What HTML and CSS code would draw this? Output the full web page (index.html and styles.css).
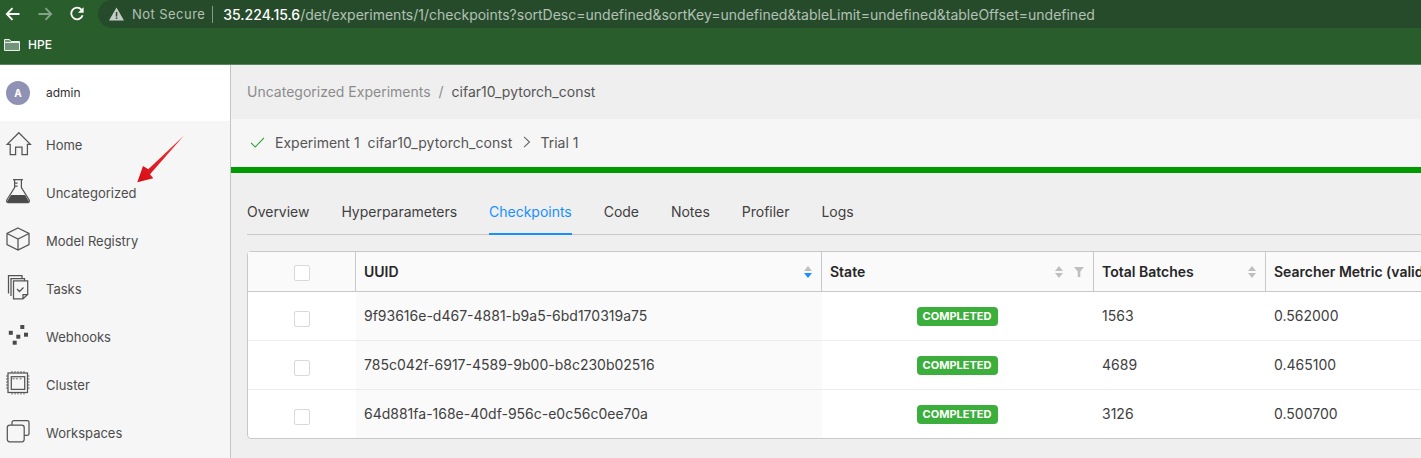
FILE: index.html
```html
<!DOCTYPE html>
<html lang="en">
<head>
<meta charset="utf-8">
<title>Checkpoints</title>
<link rel="stylesheet" href="styles.css">
</head>
<body>
<header class="browser">
  <div class="toolbar">
    <nav class="nav-buttons">
      <svg class="nav-icon" viewBox="0 0 16 16"><path d="M14.500 8H2M7.500 2.200 1.800 8l5.700 5.800"/></svg>
      <svg class="nav-icon nav-icon-off" viewBox="0 0 16 16"><path d="M1.500 8H14M8.500 2.200 14.200 8l-5.700 5.800"/></svg>
      <svg class="nav-icon" viewBox="0 0 16 16"><path d="M13.600 9.200A5.800 5.800 0 1 1 12.400 3.600"/><path class="fill" d="M14.600 1.200v5.600H9z"/></svg>
    </nav>
    <div class="omnibox">
      <svg class="warn" viewBox="0 0 15 14"><path d="M7.500 0.500 15 13.500H0z"/><rect class="warn-mark" x="6.800" y="5" width="1.500" height="4.600"/><rect class="warn-mark" x="6.800" y="10.400" width="1.500" height="1.500"/></svg>
      <span class="not-secure">Not Secure</span>
      <span class="omni-sep"></span>
      <span class="url"><span class="url-host">35.224.15.6</span>/det/experiments/1/checkpoints?sortDesc=undefined&amp;sortKey=undefined&amp;tableLimit=undefined&amp;tableOffset=undefined</span>
    </div>
  </div>
  <div class="bookmarks">
    <svg class="folder" viewBox="0 0 16 12"><path d="M.5 11.500V.5h5l1.500 2h8.500v9z"/><path class="folder-line" d="M.5 3.500h15"/></svg>
    <span class="bookmark-label">HPE</span>
  </div>
</header>

<div class="app">
  <aside class="sidebar">
    <div class="user">
      <span class="avatar">A</span>
      <span class="user-name">admin</span>
    </div>
    <ul class="menu">
      <li class="menu-item">
        <svg class="menu-icon" viewBox="0 0 24 24"><path d="M12.800-.3 1.200 11.400h3V21.600h5.400V14h6.400v7.600h5.400V11.400h3z"/></svg>
        Home
      </li>
      <li class="menu-item">
        <svg class="menu-icon" viewBox="0 0 24 24"><path d="M7-1.400h10M8.600-1.400V6.500L.8 19c-.6 1.200 0 2.600 1.500 2.600h19.400c1.500 0 2.100-1.400 1.500-2.600L15.400 6.500V-1.400M8.600 2h3M8.600 5h3"/><path class="solid" d="M5 14h14l4 6.600-1 .6H2l-1-.6z"/></svg>
        Uncategorized
      </li>
      <li class="menu-item">
        <svg class="menu-icon" viewBox="0 0 24 24"><path d="M12-1 23 4.500V15.500L12 21 1 15.500V4.500zM1 4.500 12 10 23 4.500M12 10V21"/></svg>
        Model Registry
      </li>
      <li class="menu-item">
        <svg class="menu-icon" viewBox="0 0 24 24"><path d="M7.500 3.800H21.700V17.500L17 21.800H7.500zM21.700 17.500H17V21.800M5 19V1.500H18.500V3.800M2.500 16.500V-1.500H16V1.500M11 12l2.500 2.500 4-4"/></svg>
        Tasks
      </li>
      <li class="menu-item">
        <svg class="menu-icon" viewBox="0 0 24 24"><rect class="solid" x="2.800" y="5.800" width="4" height="4"/><rect class="solid" x="14.300" y="0" width="4" height="4"/><rect class="solid" x="10.300" y="9.700" width="4" height="4"/><rect class="solid" x="18" y="7.700" width="4" height="4"/><rect class="solid" x="6.700" y="15.700" width="4" height="4"/></svg>
        Webhooks
      </li>
      <li class="menu-item">
        <svg class="menu-icon" viewBox="0 0 24 24"><rect x="2" y="0" width="19.500" height="19.500"/><rect x="5.300" y="3.700" width="13.400" height="12.700"/><path class="thin" d="M6 -2V0M9 -2V0M12 -2V0M15 -2V0M18 -2V0M6 19.500V21.500M9 19.500V21.500M12 19.500V21.500M15 19.500V21.500M18 19.500V21.500M0 3H2M0 6H2M0 9H2M0 12H2M0 15H2M21.500 3H23.500M21.500 6H23.500M21.500 9H23.500M21.500 12H23.500M21.500 15H23.500"/><path class="thin" d="M6.500 5.800h2M9.800 5.800h2M13.500 5.800h2"/></svg>
        Cluster
      </li>
      <li class="menu-item">
        <svg class="menu-icon" viewBox="0 0 24 24"><path d="M6 4V1.500Q6-.3 8-.3H21.500Q23-.3 23 1.500V12.500Q23 14.300 21 14.300H18.200"/><rect x="1.300" y="4" width="16.900" height="16.800" rx="2.500"/></svg>
        Workspaces
      </li>
    </ul>
  </aside>

  <main class="main">
    <div class="crumbs">
      <span class="crumb-muted">Uncategorized Experiments</span>
      <span class="crumb-sep">/</span>
      <span class="crumb-current">cifar10_pytorch_const</span>
    </div>
    <div class="trial-bar">
      <svg class="check" viewBox="0 0 16 12"><path d="M1 6.500 5.500 11 15 1"/></svg>
      <span class="trial-text">Experiment 1</span>
      <span class="trial-text trial-name">cifar10_pytorch_const</span>
      <svg class="chevron" viewBox="0 0 8 12"><path d="M1 .8 6.500 6 1 11.200"/></svg>
      <span class="trial-text">Trial 1</span>
    </div>
    <div class="progress"></div>
    <div class="content">
      <div class="tabs">
        <span class="tab">Overview</span>
        <span class="tab">Hyperparameters</span>
        <span class="tab tab-active">Checkpoints</span>
        <span class="tab">Code</span>
        <span class="tab">Notes</span>
        <span class="tab">Profiler</span>
        <span class="tab">Logs</span>
      </div>
      <table class="grid">
        <colgroup>
          <col class="col-check"><col class="col-uuid"><col class="col-state"><col class="col-batches"><col class="col-metric">
        </colgroup>
        <thead>
          <tr>
            <th class="cell-check"><span class="box box-head"></span></th>
            <th><div class="th-inner"><span>UUID</span>
              <svg class="sorter" viewBox="0 0 8 12"><path d="M4 0 8 5H0z"/><path class="sort-on" d="M0 7h8l-4 5z"/></svg></div></th>
            <th><div class="th-inner"><span>State</span>
              <svg class="sorter" viewBox="0 0 8 12"><path d="M4 0 8 5H0z"/><path d="M0 7h8l-4 5z"/></svg>
              <svg class="filter" viewBox="0 0 10 10"><path d="M0 0h10L6.300 4.500V10H3.700V4.500z"/></svg></div></th>
            <th><div class="th-inner"><span>Total Batches</span>
              <svg class="sorter" viewBox="0 0 8 12"><path d="M4 0 8 5H0z"/><path d="M0 7h8l-4 5z"/></svg></div></th>
            <th><div class="th-inner"><span>Searcher Metric (validation_loss)</span></div></th>
          </tr>
        </thead>
        <tbody>
          <tr>
            <td class="cell-check"><span class="box"></span></td>
            <td class="cell-uuid">9f93616e-d467-4881-b9a5-6bd170319a75</td>
            <td class="cell-state"><span class="badge">COMPLETED</span></td>
            <td>1563</td>
            <td>0.562000</td>
          </tr>
          <tr>
            <td class="cell-check"><span class="box"></span></td>
            <td class="cell-uuid">785c042f-6917-4589-9b00-b8c230b02516</td>
            <td class="cell-state"><span class="badge">COMPLETED</span></td>
            <td>4689</td>
            <td>0.465100</td>
          </tr>
          <tr>
            <td class="cell-check"><span class="box"></span></td>
            <td class="cell-uuid">64d881fa-168e-40df-956c-e0c56c0ee70a</td>
            <td class="cell-state"><span class="badge">COMPLETED</span></td>
            <td>3126</td>
            <td>0.500700</td>
          </tr>
        </tbody>
      </table>
    </div>
  </main>
</div>

<svg class="annotation" viewBox="0 0 50 50"><defs><linearGradient id="arrow-fill" x1="1" y1="0" x2="0" y2="1"><stop offset="0" stop-color="#f0343a"/><stop offset="1" stop-color="#d80d14"/></linearGradient></defs><path fill="url(#arrow-fill)" d="M47 .5 13 39.300l3.300 4L.3 47.300 6 31l5.300 3.300z"/></svg>
</body>
</html>
```

FILE: styles.css
```css
* { box-sizing: border-box; }
html, body { height: 100%; }
body {
  margin: 0;
  height: 458px;
  overflow: hidden;
  position: relative;
  display: flex;
  flex-direction: column;
  font-family: Inter, "Liberation Sans", sans-serif;
  color: #404040;
  background: #efefef;
}

/* browser chrome */
.browser { background: #295e2c; flex: none; }
.toolbar { display: flex; height: 30px; }
.nav-buttons { display: flex; align-items: center; width: 98px; height: 28px; padding-left: 5px; gap: 16px; }
.nav-icon { width: 16px; height: 16px; fill: none; stroke: #fff; stroke-width: 1.800; }
.nav-icon .fill { fill: #fff; stroke: none; }
.nav-icon-off { stroke: #83a587; }
.omnibox {
  flex: 1;
  height: 28px;
  background: #264b2b;
  border-radius: 14px 0 0 14px;
  display: flex;
  align-items: center;
  padding-left: 11px;
  font-size: 13px;
  white-space: nowrap;
}
.warn { width: 15px; height: 14px; fill: #c4cdc5; margin-right: 8px; }
.warn-mark { fill: #264b2b; }
.not-secure { color: #b4c0b6; letter-spacing: .45px; }
.omni-sep { width: 1px; height: 17px; background: #87998a; margin: 0 10px 0 7px; }
.url { color: #b4c0b6; font-size: 14px; }
.url-host { color: #fff; font-weight: 500; }
.bookmarks {
  height: 35px;
  padding: 0 0 5px 4px;
  display: flex;
  align-items: center;
  border-bottom: 1px solid #5c8561;
}
.folder { width: 16px; height: 12px; fill: #71947a; stroke: #e8eee9; stroke-width: 1; margin-right: 8px; }
.folder-line { fill: none; }
.bookmark-label { color: #fff; font-size: 12px; font-weight: 500; }

/* app shell */
.app { flex: 1; display: flex; min-height: 0; }
.sidebar { flex: none; width: 231px; background: #f6f6f6; border-right: 1px solid #c4c4c4; }
.user { height: 56px; background: #fff; display: flex; align-items: center; padding-left: 6px; }
.avatar {
  width: 24px;
  height: 24px;
  border-radius: 50%;
  background: #8f92b5;
  color: #fff;
  font-size: 10px;
  font-weight: 700;
  display: flex;
  align-items: center;
  justify-content: center;
  margin-right: 16px;
}
.user-name { font-size: 12px; line-height: 14px; color: #333; }
.menu { list-style: none; margin: 0; padding: 0; }
.menu-item { height: 48px; display: flex; align-items: center; gap: 16px; padding-left: 6px; font-size: 13px; color: #4c4c4c; }
.menu-icon { width: 24px; height: 24px; flex: none; overflow: visible; fill: none; stroke: #555; stroke-width: 1.250; }
.menu-icon .solid { fill: #4a4a4a; stroke: none; }
.menu-icon .thin { stroke-width: .9; }

/* main column */
.main { flex: 1; min-width: 0; overflow: hidden; display: flex; flex-direction: column; }
.crumbs { height: 54px; flex: none; display: flex; align-items: center; padding: 0 0 2px 16px; font-size: 14px; }
.crumb-muted { color: #8c8c8c; }
.crumb-sep { color: #8c8c8c; margin: 0 8px; }
.crumb-current { color: #555; }
.trial-bar { height: 48px; flex: none; background: #f6f6f6; display: flex; align-items: center; padding: 0 0 2px 19px; font-size: 14px; }
.check { width: 15px; height: 11px; fill: none; stroke: #2a9f2a; stroke-width: 1.200; margin-right: 10px; }
.trial-text { color: #555; }
.trial-name { margin-left: 8px; letter-spacing: .05px; }
.chevron { width: 8px; height: 12px; fill: none; stroke: #666; stroke-width: 1.100; margin: 0 9px 0 11px; }
.progress { height: 6px; flex: none; background: #009900; }
.content { flex: 1; padding: 0 0 0 16px; }
.tabs { display: flex; gap: 32px; height: 62px; border-bottom: 1px solid #c8c8c8; align-items: flex-end; font-size: 14px; color: #404040; margin-bottom: 16px; }
.tab { height: 40px; padding-top: 8px; line-height: 17px; margin-bottom: -1px; border-bottom: 2px solid transparent; letter-spacing: -.02px; }
.tab-active { color: #1890ff; border-bottom-color: #1890ff; }

/* table */
.grid {
  table-layout: fixed;
  width: 1318px;
  border-collapse: separate;
  border-spacing: 0;
  background: #fff;
  border: 1px solid #c8c8c8;
  border-radius: 4px 0 0 4px;
  font-size: 14px;
  color: #404040;
}
.col-check { width: 108px; }
.col-uuid { width: 466px; }
.col-state { width: 272px; }
.col-batches { width: 172px; }
.col-metric { width: 300px; }
th {
  height: 40px;
  padding: 0 9px 0 8px;
  background: #fafafa;
  text-align: left;
  font-weight: 600;
  color: #262626;
  border-bottom: 1px solid #c8c8c8;
  border-right: 1px solid #c8c8c8;
}
th:last-child { border-right: 0; }
.th-inner { display: flex; align-items: center; gap: 11px; white-space: nowrap; }
.th-inner span { flex: 1; }
td { height: 49px; padding: 0 8px 1px; border-bottom: 1px solid #ececec; }
tr:last-child td { border-bottom: 0; height: 48px; }
.cell-check { padding: 0; text-align: center; }
.cell-uuid { background: #fafafa; }
.cell-state { text-align: center; padding: 0 10px 0 8px; }
.box { display: inline-block; width: 16px; height: 16px; background: #fff; border: 1px solid #d9d9d9; border-radius: 2px; vertical-align: middle; margin-top: 5px; }
.box-head { margin-top: 0; }
.sorter { width: 8px; height: 12px; flex: none; fill: #bfbfbf; }
.sort-on { fill: #1890ff; }
.filter { width: 10px; height: 10px; flex: none; fill: #bfbfbf; }
.badge {
  display: inline-block;
  width: 81px;
  height: 19px;
  line-height: 19px;
  border-radius: 4px;
  background: #3cae3c;
  color: #fff;
  font-size: 11px;
  font-weight: 700;
  text-align: center;
  vertical-align: middle;
}

/* red annotation arrow drawn over the page */
.annotation { position: absolute; left: 137px; top: 135px; width: 50px; height: 50px; }
```
